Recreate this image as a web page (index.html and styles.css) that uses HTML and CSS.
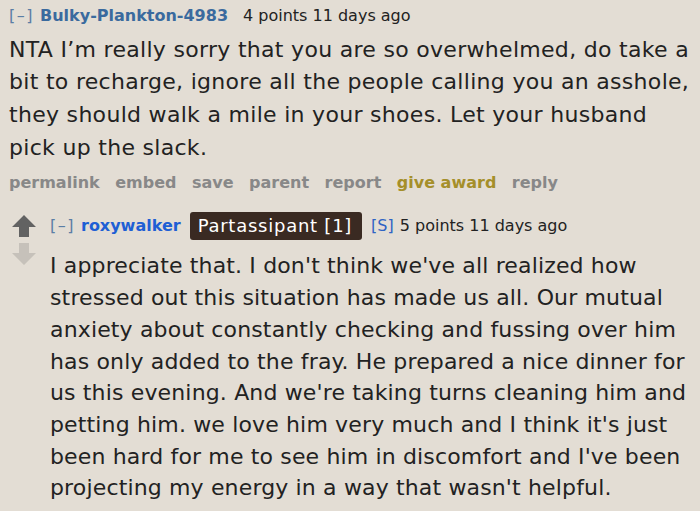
FILE: index.html
```html
<!DOCTYPE html>
<html>
<head>
<meta charset="utf-8">
<link rel="stylesheet" href="styles.css">
</head>
<body>
<div class="comment">
  <div class="tagline">
    <span class="expand">[–]</span>
    <span class="author">Bulky-Plankton-4983</span>
    <span class="score">4 points 11 days ago</span>
  </div>
  <div class="md">
    <span class="line">NTA I’m really sorry that you are so overwhelmed, do take a</span>
    <span class="line">bit to recharge, ignore all the people calling you an asshole,</span>
    <span class="line">they should walk a mile in your shoes. Let your husband</span>
    <span class="line">pick up the slack.</span>
  </div>
  <ul class="buttons">
    <li>permalink</li>
    <li>embed</li>
    <li>save</li>
    <li>parent</li>
    <li>report</li>
    <li class="award">give award</li>
    <li>reply</li>
  </ul>
  <div class="child">
    <div class="votes">
      <svg class="up" width="24" height="22" viewBox="0 0 24 22"><path d="M12 0 L24 12 L17 12 L17 22 L7 22 L7 12 L0 12 Z" fill="#626262"/></svg>
      <svg class="down" width="24" height="22" viewBox="0 0 24 22"><path d="M7 0 L17 0 L17 10 L24 10 L12 22 L0 10 L7 10 Z" fill="#c6c1ba"/></svg>
    </div>
    <div class="entry">
      <div class="tagline child-tag">
        <span class="expand">[–]</span>
        <span class="author blue">roxywalker</span>
        <span class="flair">Partassipant [1]</span>
        <span class="op">[S]</span>
        <span class="score">5 points 11 days ago</span>
      </div>
      <div class="md md2">
        <span class="line">I appreciate that. I don't think we've all realized how</span>
        <span class="line">stressed out this situation has made us all. Our mutual</span>
        <span class="line">anxiety about constantly checking and fussing over him</span>
        <span class="line">has only added to the fray. He prepared a nice dinner for</span>
        <span class="line">us this evening. And we're taking turns cleaning him and</span>
        <span class="line">petting him. we love him very much and I think it's just</span>
        <span class="line">been hard for me to see him in discomfort and I've been</span>
        <span class="line">projecting my energy in a way that wasn't helpful.</span>
      </div>
    </div>
  </div>
</div>
</body>
</html>
```

FILE: styles.css
```css
html, body {
  margin: 0;
  padding: 0;
  background: #e3ddd4;
}
body {
  font-family: "DejaVu Sans", Verdana, sans-serif;
  color: #222;
  overflow: hidden;
}
.comment {
  padding: 5px 0 0 9px;
}
.tagline {
  font-size: 16px;
  line-height: 22px;
  height: 22px;
  display: flex;
  align-items: center;
}
.expand {
  color: #5b7ea5;
  letter-spacing: 1.5px;
  margin-right: 6px;
}
.author {
  color: #3a6a9e;
  font-weight: bold;
  margin-right: 15px;
}
.author.blue {
  color: #1e5fd4;
  margin-right: 9px;
}
.score {
  color: #222;
}
.md {
  font-size: 22px;
  letter-spacing: 0.3px;
  line-height: 32.7px;
  margin-top: 6.6px;
  white-space: nowrap;
}
.line {
  display: block;
}
.buttons {
  list-style: none;
  margin: 8px 0 0 0;
  padding: 0;
  display: flex;
  gap: 15.5px;
  font-size: 16px;
  font-weight: bold;
  color: #888;
  line-height: 22px;
}
.buttons .award {
  color: #a58f2a;
}
.child {
  display: flex;
  margin-top: 18px;
  margin-left: 3px;
}
.votes {
  display: flex;
  flex-direction: column;
  gap: 6px;
  width: 38px;
  flex-shrink: 0;
  padding-top: 3px;
}
.entry {
  flex: 1;
  min-width: 0;
}
.child-tag {
  height: 28px;
}
.flair {
  background: #3a2a22;
  color: #fff;
  font-size: 18px;
  letter-spacing: 0.75px;
  border-radius: 3px;
  padding: 0 10px 0 8px;
  height: 28px;
  line-height: 28px;
  margin-right: 9px;
}
.op {
  color: #2f63c4;
  margin-right: 6px;
}
.md2 {
  line-height: 31.7px;
  margin-top: 10px;
  letter-spacing: 0.15px;
}
```
